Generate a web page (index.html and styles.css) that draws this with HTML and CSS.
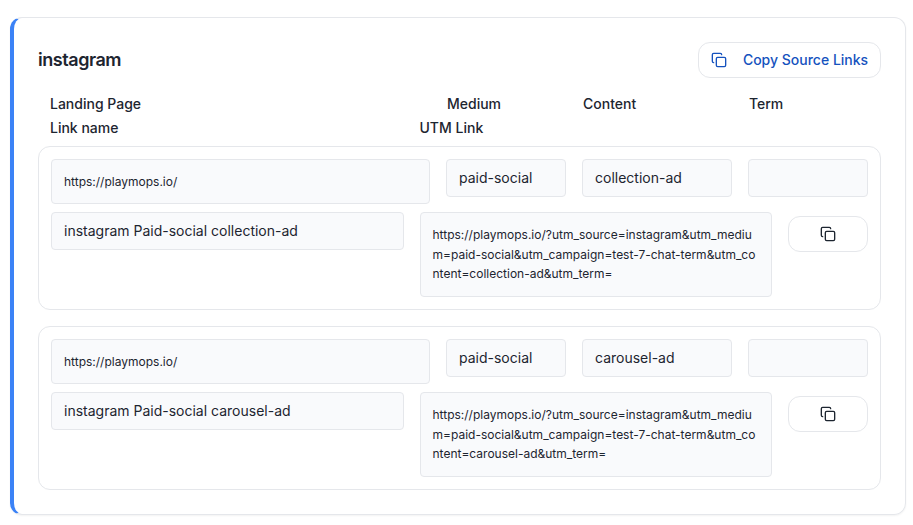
FILE: index.html
```html
<!DOCTYPE html>
<html lang="en">
<head>
<meta charset="utf-8">
<title>UTM links</title>
<link rel="stylesheet" href="styles.css">
</head>
<body>
<svg class="defs" width="0" height="0" aria-hidden="true">
  <symbol id="copy" viewBox="0 0 24 24" fill="none" stroke="currentColor" stroke-width="2" stroke-linecap="round" stroke-linejoin="round">
    <rect x="8" y="8" width="14" height="14" rx="2"/>
    <path d="M4 16c-1.1 0-2-.9-2-2V4c0-1.1.9-2 2-2h10c1.1 0 2 .9 2 2"/>
  </symbol>
</svg>
<main class="card">
  <header class="card-head">
    <h3 class="title">instagram</h3>
    <button class="btn btn-source"><svg class="icon"><use href="#copy"/></svg>Copy Source Links</button>
  </header>
  <div class="labels">
    <div class="top"><span>Landing Page</span><span>Medium</span><span>Content</span><span>Term</span></div>
    <div class="bottom"><span>Link name</span><span>UTM Link</span></div>
  </div>
  <section class="link">
    <div class="top">
      <div class="field small">https://playmops.io/</div>
      <div class="field">paid-social</div>
      <div class="field">collection-ad</div>
      <div class="field"></div>
    </div>
    <div class="bottom">
      <div class="field">instagram Paid-social collection-ad</div>
      <div class="field small utm">https://playmops.io/?utm_source=instagram&amp;utm_medium=paid-social&amp;utm_campaign=test-7-chat-term&amp;utm_content=collection-ad&amp;utm_term=</div>
      <button class="btn btn-copy" aria-label="Copy"><svg class="icon"><use href="#copy"/></svg></button>
    </div>
  </section>
  <section class="link">
    <div class="top">
      <div class="field small">https://playmops.io/</div>
      <div class="field">paid-social</div>
      <div class="field">carousel-ad</div>
      <div class="field"></div>
    </div>
    <div class="bottom">
      <div class="field">instagram Paid-social carousel-ad</div>
      <div class="field small utm">https://playmops.io/?utm_source=instagram&amp;utm_medium=paid-social&amp;utm_campaign=test-7-chat-term&amp;utm_content=carousel-ad&amp;utm_term=</div>
      <button class="btn btn-copy" aria-label="Copy"><svg class="icon"><use href="#copy"/></svg></button>
    </div>
  </section>
</main>
</body>
</html>
```
FILE: styles.css
```css
* { box-sizing: border-box; }
body {
  margin: 0;
  padding: 17px 7px 10px 10px;
  background: #fff;
  color: #1d2530;
  font: 14px/20px Inter, "Liberation Sans", sans-serif;
}
.defs { display: block; }
.card {
  height: 498px;
  padding: 24px;
  border: 1px solid #e5e7eb;
  border-left: 4px solid #3b82f6;
  border-radius: 12px;
  box-shadow: 0 1px 2px rgba(0, 0, 0, .05);
}
.card-head {
  display: flex;
  align-items: center;
  justify-content: space-between;
  height: 36px;
}
.title {
  margin: 0;
  font-size: 18px;
  line-height: 28px;
  font-weight: 600;
  letter-spacing: -.45px;
}
.btn {
  display: flex;
  align-items: center;
  justify-content: center;
  height: 36px;
  padding: 0 12px;
  border: 1px solid #e5e7eb;
  border-radius: 12px;
  background: #fff;
  color: inherit;
  font: inherit;
  font-weight: 500;
}
.btn-source { width: 183px; gap: 16px; color: #1552be; white-space: nowrap; }
.icon { width: 16px; height: 16px; flex: none; }
.labels { margin-top: 14px; padding: 0 12px; font-weight: 500; line-height: 24px; }
.top {
  display: grid;
  grid-template-columns: 1fr 120px 150px 120px;
  column-gap: 16px;
  align-items: start;
}
.bottom {
  display: grid;
  grid-template-columns: 1fr 1fr 80px;
  column-gap: 16px;
  align-items: start;
}
.link {
  height: 164px;
  margin-top: 6px;
  padding: 12px;
  border: 1px solid #e5e7eb;
  border-radius: 12px;
}
.link + .link { margin-top: 16px; }
.link .bottom { margin-top: 8px; }
.field {
  height: 38px;
  padding: 8px 12px;
  border: 1px solid #e5e7eb;
  border-radius: 4px;
  background: #f9fafc;
}
.small {
  height: 45px;
  padding: 12px;
  font-size: 12px;
  line-height: 19.5px;
}
.utm { height: 85px; word-break: break-all; }
.btn-copy { margin-top: 4px; }
```
